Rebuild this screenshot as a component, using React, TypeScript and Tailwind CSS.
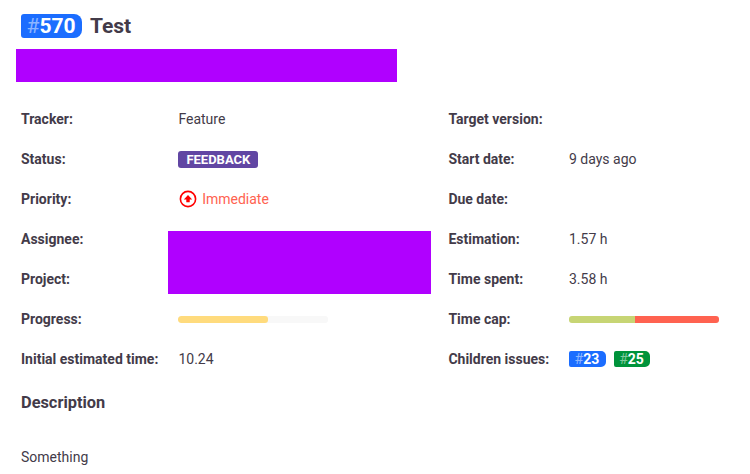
import type { ReactNode } from "react";

function Field({ label, children }: { label: string; children?: ReactNode }) {
  return (
    <div className="flex h-10 items-center">
      <dt className="w-[157.4px] shrink-0 font-bold group-data-[side=right]:w-[120.6px]">{label}:</dt>
      <dd className="flex items-center">{children}</dd>
    </div>
  );
}

function IssueTag({ id, color }: { id: number; color: string }) {
  return (
    <span className={`flex h-4 items-center rounded-l-[2px] rounded-r-[5px] pr-[6.3px] pl-[5.6px] leading-4 font-bold text-white ${color}`}>
      <span className="font-normal text-white/50">#</span>
      {id}
    </span>
  );
}

function PriorityIcon() {
  return (
    <svg width="18" height="18" viewBox="0 0 18 18" className="mr-[5.2px] ml-[0.6px]">
      <circle cx="9" cy="9" r="7.6" fill="none" stroke="#ff0000" strokeWidth="1.6" />
      <path d="M9 5 13.2 9.4H10.7V12.2H7.3V9.4H4.8Z" fill="#ff0000" />
    </svg>
  );
}

export default function App() {
  return (
    <main className="h-[474px] w-[750px] overflow-hidden bg-white pt-3.5 pl-[21px] font-[Roboto,sans-serif] text-sm text-[#433b49]">
      <header className="flex h-6 items-center">
        <span className="flex h-6 items-center rounded-l-[3px] rounded-r-[8px] bg-[#1b6dff] pr-[6.8px] pl-[5.5px] text-[21px] leading-6 font-bold text-white">
          <span className="font-normal text-white/50">#</span>570
        </span>
        <h1 className="ml-[7.5px] text-[21px] leading-6 font-bold">Test</h1>
      </header>
      <div className="mt-[11px] -ml-[5px] h-[33px] w-[381px] bg-[#b000ff]" />

      <div className="relative mt-[17px] flex">
        <dl data-side="left" className="group w-[427.4px]">
          <Field label="Tracker">Feature</Field>
          <Field label="Status">
            <span className="mt-px h-[17px] rounded-[3px] bg-[#6146a3] px-2 text-[13px] leading-[17px] font-bold text-white">FEEDBACK</span>
          </Field>
          <Field label="Priority">
            <PriorityIcon />
            <span className="text-[#ff6250]">Immediate</span>
          </Field>
          <Field label="Assignee" />
          <Field label="Project" />
          <Field label="Progress">
            <div className="mt-px h-[7px] w-[150px] overflow-hidden rounded-[3px] bg-[#f8f8f8]">
              <div className="h-full w-[90px] rounded-[3px] bg-[#ffdb7d]" />
            </div>
          </Field>
          <Field label="Initial estimated time">10.24</Field>
        </dl>
        <dl data-side="right" className="group">
          <Field label="Target version" />
          <Field label="Start date">9 days ago</Field>
          <Field label="Due date" />
          <Field label="Estimation">1.57 h</Field>
          <Field label="Time spent">3.58 h</Field>
          <Field label="Time cap">
            <div className="mt-px flex h-[7px] w-[150px] overflow-hidden rounded-[3px]">
              <div className="w-[66px] bg-[#c7d574]" />
              <div className="flex-1 bg-[#ff6250]" />
            </div>
          </Field>
          <Field label="Children issues">
            <div className="flex gap-2">
              <IssueTag id={23} color="bg-[#1b6dff]" />
              <IssueTag id={25} color="bg-[#00933b]" />
            </div>
          </Field>
        </dl>
        <div className="absolute top-[132px] left-[147px] h-[63px] w-[263px] bg-[#b000ff]" />
      </div>

      <h2 className="mt-3.5 text-[16.38px] leading-5 font-bold">Description</h2>
      <p className="mt-[34px] leading-5">Something</p>
    </main>
  );
}
